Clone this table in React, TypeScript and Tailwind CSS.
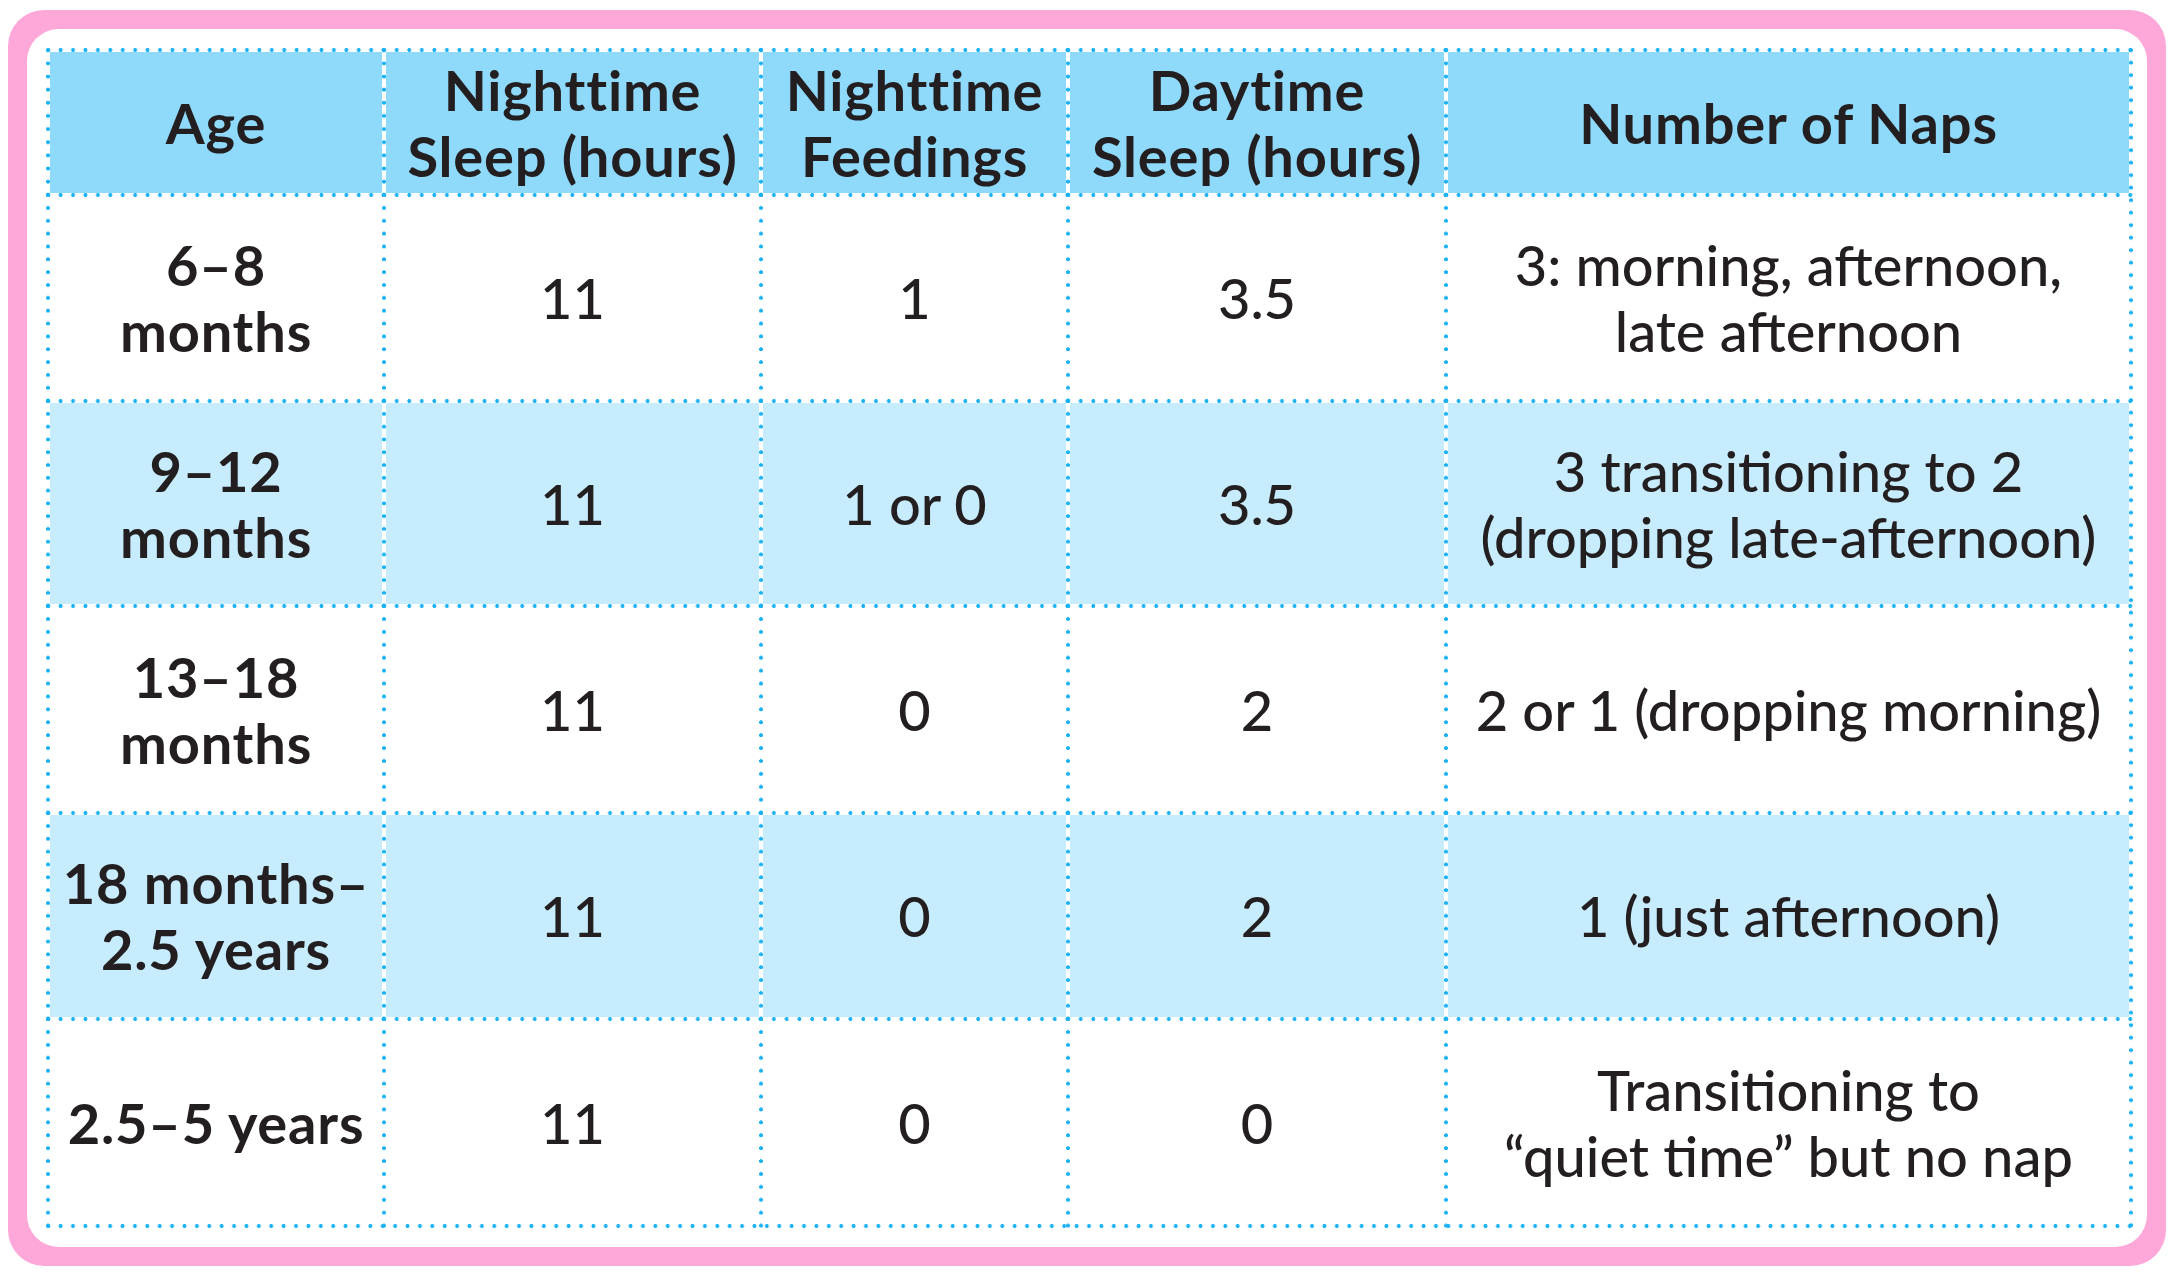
import type { ReactNode } from 'react'

type Row = {
  age: ReactNode
  night: string
  feed: string
  day: string
  naps: ReactNode
  shaded: boolean
}

const rows: Row[] = [
  { age: <>6–8<br />months</>, night: '11', feed: '1', day: '3.5', naps: <>3: morning, afternoon,<br />late afternoon</>, shaded: false },
  { age: <>9–12<br />months</>, night: '11', feed: '1 or 0', day: '3.5', naps: <>3 transitioning to 2<br />(dropping late-afternoon)</>, shaded: true },
  { age: <>13–18<br />months</>, night: '11', feed: '0', day: '2', naps: '2 or 1 (dropping morning)', shaded: false },
  { age: <>18 months–<br />2.5 years</>, night: '11', feed: '0', day: '2', naps: '1 (just afternoon)', shaded: true },
  { age: '2.5–5 years', night: '11', feed: '0', day: '0', naps: <>Transitioning to<br />“quiet time” but no nap</>, shaded: false },
]

// each cell draws the dotted line on its top and left edge
function Cell({ children, fill, bold }: { children: ReactNode; fill: string; bold?: boolean }) {
  return (
    <div
      className={`relative flex items-center justify-center text-center border-2 border-white bg-clip-padding ${fill} ${bold ? 'font-bold tracking-[0.8px]' : 'font-medium'} before:absolute before:left-[-8.2px] before:right-[-8.2px] before:top-[-4px] before:h-[4px] before:bg-[radial-gradient(circle,#1bb2f3_1.7px,transparent_2.2px)] before:bg-[length:12.4px_4px] before:bg-repeat-space after:absolute after:top-[-8.2px] after:bottom-[-8.2px] after:left-[-4px] after:w-[4px] after:bg-[radial-gradient(circle,#1bb2f3_1.7px,transparent_2.2px)] after:bg-[length:4px_12.4px] after:bg-repeat-space`}
    >
      <div>{children}</div>
    </div>
  )
}

export default function App() {
  const headFill = 'bg-[#8fd9fb]'
  return (
    <div className="min-h-screen bg-white pl-[8px] pt-[10px] font-['Lato','Noto_Sans',sans-serif] text-[#231f20]">
      <div className="w-[2158px] h-[1256px] rounded-[36px] bg-[#fea8da] p-[19px]">
        <div className="h-full rounded-[32px] bg-white pl-[21px] pr-[16px] pt-[21px] pb-[21px]">
          <div className="relative grid grid-cols-[336px_377px_307px_378px_685px] grid-rows-[145px_206px_205px_207px_206px_207px] text-[56px] leading-[66px] before:absolute before:z-10 before:left-[-6.2px] before:right-[-6.2px] before:bottom-[-2px] before:h-[4px] before:bg-[radial-gradient(circle,#1bb2f3_1.7px,transparent_2.2px)] before:bg-[length:12.4px_4px] before:bg-repeat-space after:absolute after:z-10 after:top-[-6.2px] after:bottom-[-6.2px] after:right-[-2px] after:w-[4px] after:bg-[radial-gradient(circle,#1bb2f3_1.7px,transparent_2.2px)] after:bg-[length:4px_12.4px] after:bg-repeat-space">
            <Cell fill={headFill} bold>Age</Cell>
            <Cell fill={headFill} bold>Nighttime<br />Sleep (hours)</Cell>
            <Cell fill={headFill} bold>Nighttime<br />Feedings</Cell>
            <Cell fill={headFill} bold>Daytime<br />Sleep (hours)</Cell>
            <Cell fill={headFill} bold>Number of Naps</Cell>

            {rows.map((r, i) => {
              const fill = r.shaded ? 'bg-[#c7ecfd]' : 'bg-white'
              return [
                <Cell key={`a${i}`} fill={fill} bold>{r.age}</Cell>,
                <Cell key={`b${i}`} fill={fill}>{r.night}</Cell>,
                <Cell key={`c${i}`} fill={fill}>{r.feed}</Cell>,
                <Cell key={`d${i}`} fill={fill}>{r.day}</Cell>,
                <Cell key={`e${i}`} fill={fill}>{r.naps}</Cell>,
              ]
            })}
          </div>
        </div>
      </div>
    </div>
  )
}
